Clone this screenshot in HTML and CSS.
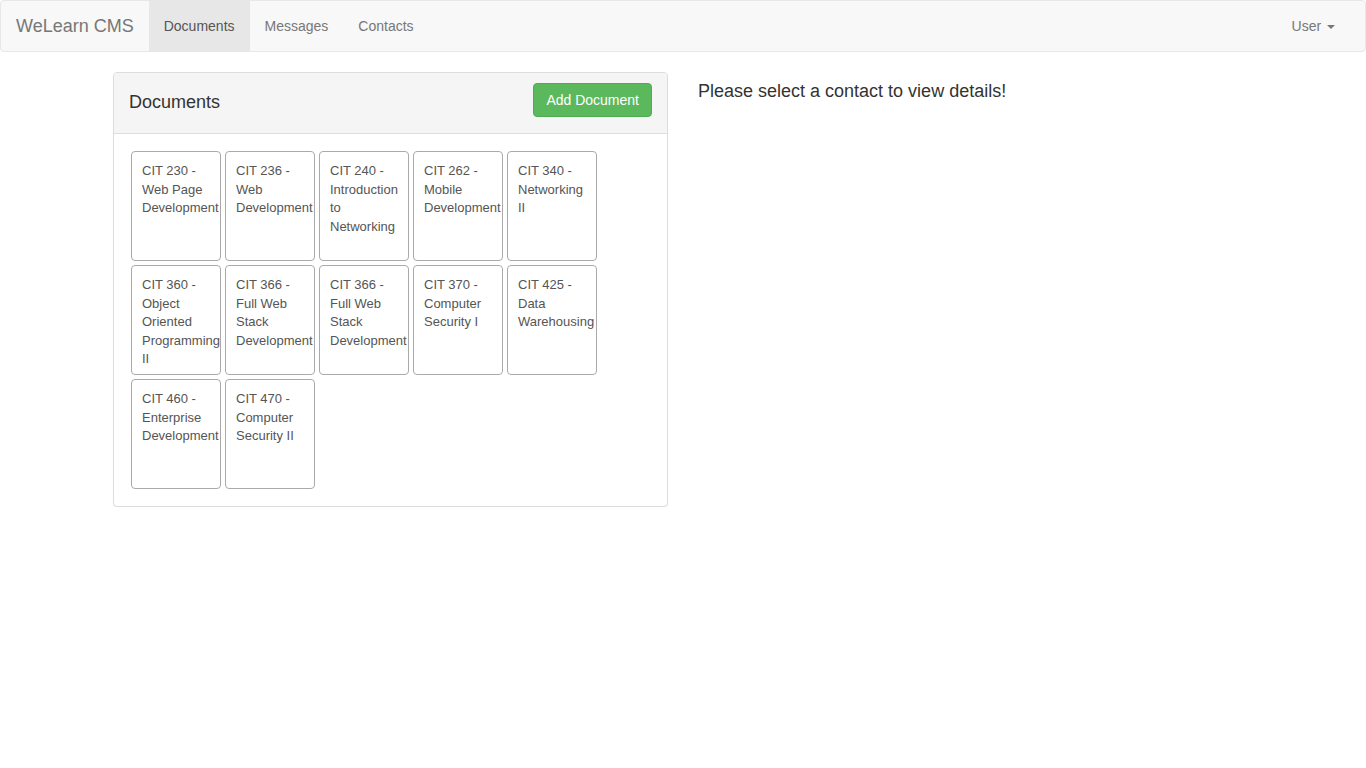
FILE: index.html
```html
<!DOCTYPE html>
<html lang="en">
<head>
<meta charset="utf-8">
<title>WeLearn CMS</title>
<link rel="stylesheet" href="styles.css">
</head>
<body>
<nav class="navbar">
  <div class="nav-left">
    <a class="brand" href="#">WeLearn CMS</a>
    <ul class="nav">
      <li class="active"><a href="#">Documents</a></li>
      <li><a href="#">Messages</a></li>
      <li><a href="#">Contacts</a></li>
    </ul>
  </div>
  <ul class="nav">
    <li><a href="#">User <span class="caret"></span></a></li>
  </ul>
</nav>
<div class="container">
  <div class="col">
    <div class="panel">
      <div class="panel-heading">
        <h3 class="panel-title">Documents</h3>
        <button class="btn">Add Document</button>
      </div>
      <div class="panel-body">
        <div class="tile">CIT 230 - Web Page Development</div>
        <div class="tile">CIT 236 - Web Development</div>
        <div class="tile">CIT 240 - Introduction to Networking</div>
        <div class="tile">CIT 262 - Mobile Development</div>
        <div class="tile">CIT 340 - Networking II</div>
        <div class="tile">CIT 360 - Object Oriented Programming II</div>
        <div class="tile">CIT 366 - Full Web Stack Development</div>
        <div class="tile">CIT 366 - Full Web Stack Development</div>
        <div class="tile">CIT 370 - Computer Security I</div>
        <div class="tile">CIT 425 - Data Warehousing</div>
        <div class="tile">CIT 460 - Enterprise Development</div>
        <div class="tile">CIT 470 - Computer Security II</div>
      </div>
    </div>
  </div>
  <div class="col">
    <h4 class="notice">Please select a contact to view details!</h4>
  </div>
</div>
</body>
</html>
```
FILE: styles.css
```css
* { box-sizing: border-box; }
html, body { margin: 0; padding: 0; }
body {
  font-family: "Liberation Sans", Arial, sans-serif;
  font-size: 14px;
  line-height: 1.42857;
  color: #333;
  background: #fff;
}
a { text-decoration: none; }

.navbar {
  height: 52px;
  background: #f8f8f8;
  border: 1px solid #e7e7e7;
  border-radius: 4px;
  display: flex;
  justify-content: space-between;
  padding: 0 15px 0 0;
  margin-bottom: 20px;
}
.nav-left { display: flex; }
.brand {
  display: block;
  height: 50px;
  padding: 15px;
  font-size: 18px;
  line-height: 20px;
  color: #777;
}
.nav {
  list-style: none;
  margin: 0;
  padding: 0;
  display: flex;
}
.nav li a {
  display: block;
  padding: 15px;
  line-height: 20px;
  color: #777;
}
.nav li.active a {
  background: #e7e7e7;
  color: #555;
}
.caret {
  display: inline-block;
  width: 0;
  height: 0;
  margin-left: 2px;
  vertical-align: middle;
  border-top: 4px solid #777;
  border-left: 4px solid transparent;
  border-right: 4px solid transparent;
}

.container {
  width: 1170px;
  margin: 0 auto;
  display: flex;
}
.col {
  width: 585px;
  padding: 0 15px;
}

.panel {
  border: 1px solid #ddd;
  border-radius: 4px;
  background: #fff;
  box-shadow: 0 1px 1px rgba(0,0,0,.05);
}
.panel-heading {
  background: #f5f5f5;
  border-bottom: 1px solid #ddd;
  border-radius: 3px 3px 0 0;
  padding: 10px 15px 16px;
  display: flex;
  justify-content: space-between;
  align-items: center;
}
.panel-title {
  margin: 4px 0 0;
  font-size: 18px;
  font-weight: normal;
  line-height: 20px;
  color: #333;
}
.btn {
  font-family: inherit;
  font-size: 14px;
  line-height: 20px;
  padding: 6px 12px;
  color: #fff;
  background: #5cb85c;
  border: 1px solid #4cae4c;
  border-radius: 4px;
  cursor: pointer;
}
.panel-body {
  padding: 17px;
  display: flex;
  flex-wrap: wrap;
  gap: 4px;
}
.tile {
  width: 90px;
  height: 110px;
  border: 1px solid #aaa;
  border-radius: 4px;
  padding: 10px 10px 9px;
  font-size: 13px;
  line-height: 18.57px;
  color: #555;
}
.notice {
  margin: 10px 0;
  font-size: 18px;
  font-weight: 500;
  line-height: 1.1;
  color: #333;
}
```
